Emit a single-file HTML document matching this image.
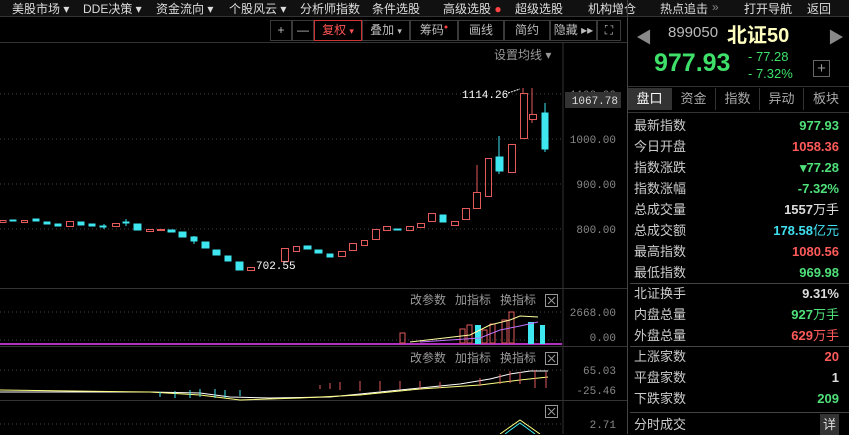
<!DOCTYPE html>
<html><head><meta charset="utf-8"><style>
*{margin:0;padding:0;box-sizing:border-box}
body{width:849px;height:434px;background:#000;overflow:hidden;position:relative;font-family:"Liberation Sans","Noto Sans CJK SC",sans-serif;color:#ccc}
.a{position:absolute;white-space:nowrap}
.menu{left:0;top:0;width:849px;height:17px;background:#111;border-bottom:1px solid #333;font-size:12px;color:#ddd}
.menu span{position:absolute;top:0}
.tb{top:20px;height:21px;border:1px solid #3a3a3a;font-size:12px;color:#bbb;text-align:center;line-height:19px}
.row{position:absolute;left:634px;width:205px;font-size:13px;height:21px;line-height:21px}
.row b{position:absolute;right:0;font-weight:bold;font-family:"Liberation Sans","Noto Sans CJK SC",sans-serif}
.g{color:#4fe07a}.r{color:#ff5a5a}.c{color:#40e0f0}.w{color:#ddd}
.tab{top:88px;height:22px;width:44px;text-align:center;font-size:13px;line-height:22px;color:#aaa;border-right:1px solid #333}
</style></head><body>
<div class="a menu">
<span style="left:12px">美股市场 ▾</span><span style="left:83px">DDE决策 ▾</span><span style="left:156px">资金流向 ▾</span><span style="left:229px">个股风云 ▾</span><span style="left:300px">分析师指数</span><span style="left:372px">条件选股</span><span style="left:443px">高级选股 <i style="color:#f44;font-style:normal">●</i></span><span style="left:515px">超级选股</span><span style="left:588px">机构增仓</span><span style="left:660px">热点追击</span><span style="left:712px;color:#888">»</span><span style="left:744px">打开导航</span><span style="left:807px">返回</span>
</div>
<div class="a tb" style="left:270px;width:22px">+</div>
<div class="a tb" style="left:292px;width:22px">—</div>
<div class="a tb" style="left:314px;width:48px;border-color:#c33;color:#f55">复权 <span style="font-size:9px">▾</span></div>
<div class="a tb" style="left:362px;width:48px">叠加 <span style="font-size:9px">▾</span></div>
<div class="a tb" style="left:410px;width:48px">筹码<span style="color:#f44;font-size:7px;position:relative;top:-5px">●</span></div>
<div class="a tb" style="left:458px;width:46px">画线</div>
<div class="a tb" style="left:504px;width:46px">简约</div>
<div class="a tb" style="left:550px;width:47px">隐藏 ▸▸</div>
<div class="a tb" style="left:597px;width:24px">⛶</div>
<div class="a" style="left:0;top:42px;width:628px;height:1px;background:#333"></div>
<div class="a" style="left:494px;top:46px;font-size:12px;color:#999">设置均线 ▾</div>

<svg class="a" style="left:0;top:0" width="628" height="434">
<g stroke="#444" stroke-dasharray="1 3">
<line x1="0" y1="94" x2="562" y2="94"/><line x1="0" y1="139" x2="562" y2="139"/><line x1="0" y1="184" x2="562" y2="184"/><line x1="0" y1="229" x2="562" y2="229"/>
<line x1="0" y1="312" x2="562" y2="312"/><line x1="0" y1="340" x2="562" y2="340"/><line x1="0" y1="370" x2="562" y2="370"/><line x1="0" y1="424" x2="562" y2="424"/>
</g>
<line x1="563" y1="42" x2="563" y2="434" stroke="#333"/>
<line x1="0" y1="288.5" x2="628" y2="288.5" stroke="#333"/>
<line x1="0" y1="346.5" x2="628" y2="346.5" stroke="#333"/>
<line x1="0" y1="400.5" x2="628" y2="400.5" stroke="#333"/>
<line x1="627.5" y1="0" x2="627.5" y2="434" stroke="#444"/>
<g font-family="Liberation Mono,monospace" font-size="11" fill="#888" text-anchor="end">
<text x="616" y="98">1100.00</text>
<text x="616" y="143">1000.00</text><text x="616" y="188">900.00</text><text x="616" y="233">800.00</text>
<text x="616" y="316">2668.00</text><text x="616" y="341">0.00</text><text x="616" y="374">65.03</text><text x="616" y="394">-25.46</text><text x="616" y="428">2.71</text>
</g>
<rect x="565" y="92" width="56" height="16" fill="#333"/>
<text x="618" y="104" font-family="Liberation Mono,monospace" font-size="11" fill="#ddd" text-anchor="end">1067.78</text>
<g stroke-width="1">
<g fill="none" stroke="#e25a5a">
<rect x="0" y="220.5" width="6" height="2"/><rect x="21.5" y="220.5" width="6" height="2"/><rect x="66.5" y="221.5" width="7" height="5"/><rect x="112.5" y="223.5" width="7" height="3"/><rect x="146.5" y="229.5" width="7" height="2"/><rect x="157.5" y="229.5" width="7" height="1"/><rect x="247.5" y="267.5" width="7" height="3"/><rect x="281.5" y="248.5" width="7" height="13"/><rect x="293.5" y="246.5" width="6" height="5"/><rect x="338.5" y="251.5" width="7" height="5"/><rect x="349.5" y="243.5" width="7" height="7"/><rect x="361.5" y="240.5" width="6" height="5"/><rect x="372.5" y="229.5" width="7" height="10"/><rect x="383.5" y="226.5" width="7" height="4"/><rect x="406.5" y="226.5" width="7" height="4"/><rect x="417.5" y="223.5" width="7" height="4"/><rect x="428.5" y="213.5" width="7" height="8"/><rect x="451.5" y="221.5" width="7" height="4"/><rect x="462.5" y="208.5" width="7" height="11"/><rect x="473.5" y="192.5" width="7" height="16"/><rect x="485.5" y="158.5" width="6" height="38"/><rect x="508.5" y="144.5" width="7" height="28"/><rect x="520.5" y="93.5" width="7" height="45"/><rect x="529.5" y="114.5" width="7" height="5"/>
<path d="M477 192V165M532 114V88M532 119V123M523 93V88"/>
</g>
<g fill="#3ee6f0" stroke="#3ee6f0">
<rect x="10" y="220" width="6" height="1"/><rect x="33" y="219" width="6" height="2"/><rect x="44" y="222" width="6" height="2"/><rect x="55" y="224" width="6" height="2"/><rect x="78" y="222" width="6" height="3"/><rect x="89" y="224" width="6" height="2"/><rect x="100" y="226" width="6" height="1"/><rect x="123" y="222" width="6" height="1"/><rect x="134" y="224" width="7" height="6"/><rect x="168" y="230" width="7" height="2"/><rect x="179" y="232" width="7" height="5"/><rect x="191" y="237" width="6" height="4"/><rect x="202" y="242" width="7" height="6"/><rect x="213" y="250" width="7" height="5"/><rect x="225" y="256" width="6" height="5"/><rect x="236" y="262" width="7" height="8"/><rect x="304" y="246" width="7" height="3"/><rect x="315" y="250" width="7" height="3"/><rect x="327" y="254" width="6" height="3"/><rect x="394" y="229" width="7" height="1"/><rect x="440" y="215" width="6" height="7"/><rect x="496" y="157" width="7" height="14"/><rect x="542" y="113" width="6" height="36"/>
<path d="M499 157V136M499 171V174M545 113V103M545 149V152M126 219V226M104 224V229M194 236V244" fill="none"/>
</g>
</g>
<text x="256" y="269" font-family="Liberation Mono,monospace" font-size="11" fill="#fff">702.55</text>
<text x="462" y="98" font-family="Liberation Mono,monospace" font-size="11" fill="#fff">1114.26</text>
<path d="M508 93l12-4" stroke="#fff" stroke-dasharray="2 1"/>
<g font-size="12" fill="#999" font-family="Noto Sans CJK SC,sans-serif"><text x="410" y="304">改参数</text><text x="455" y="304">加指标</text><text x="500" y="304">换指标</text>
<text x="410" y="362">改参数</text><text x="455" y="362">加指标</text><text x="500" y="362">换指标</text></g>
<g fill="none" stroke="#999"><rect x="545.5" y="294.5" width="12" height="12"/><rect x="545.5" y="352.5" width="12" height="12"/><rect x="545.5" y="405.5" width="12" height="12"/>
<path d="M548 297l7 7M555 297l-7 7M548 355l7 7M555 355l-7 7M548 408l7 7M555 408l-7 7"/></g>
<line x1="0" y1="344" x2="562" y2="344" stroke="#b030c0" stroke-width="2"/>
<g fill="none" stroke="#e25a5a"><rect x="400" y="333" width="5" height="10"/><rect x="460" y="329" width="5" height="14"/><rect x="467" y="325" width="5" height="18"/><rect x="490" y="324" width="5" height="19"/><rect x="502" y="320" width="5" height="23"/><rect x="509" y="312" width="5" height="31"/><rect x="482" y="330" width="5" height="13"/></g>
<g fill="#3ee6f0"><rect x="475" y="325" width="6" height="19"/><rect x="528" y="322" width="6" height="22"/><rect x="540" y="325" width="5" height="19"/></g>
<path d="M410 342L470 335L490 325L510 320L520 316L538 317" stroke="#ffffa0" fill="none"/>
<path d="M420 342L480 338L500 330L520 326L538 322" stroke="#c070ff" fill="none"/>
<path d="M0 392L150 392L200 393L230 397L270 398L330 397L380 392L420 388L460 384L490 379L510 374L530 371L548 371" stroke="#fff" fill="none"/>
<path d="M0 390L150 392L200 395L240 400L300 398L360 395L420 389L480 385L520 380L548 377" stroke="#ffff80" fill="none"/>
<g stroke="#e25a5a"><path d="M320 385v4M330 383v6M340 382v8M360 381v10M380 381v10M400 381v8M420 381v8M440 382v6M480 378v8M500 374v10M510 371v12M520 372v12M535 370v18M546 372v16"/></g>
<g stroke="#3ee6f0"><path d="M160 392v5M175 391v7M190 390v8M200 389v8M215 389v9M225 390v8M240 390v6"/></g>
<path d="M500 434L520 420L540 434" stroke="#ffff80" fill="none"/><path d="M505 434L520 423L535 434" stroke="#3ee6f0" fill="none"/>
</svg>

<div class="a" style="left:636px;top:24px;font-size:16px;color:#888">◀</div>
<div class="a" style="left:828px;top:24px;font-size:16px;color:#888">▶</div>
<div class="a" style="left:668px;top:24px;font-size:15px;color:#bbb">899050</div>
<div class="a" style="left:727px;top:19px;font-size:20px;font-weight:bold;color:#ffffc0">北证50</div>
<div class="a" style="left:654px;top:49px;font-size:25px;font-weight:bold;color:#3ee06a">977.93</div>
<div class="a" style="left:748px;top:48px;font-size:13px;color:#3ee06a;line-height:17px">- 77.28<br>- 7.32%</div>
<div class="a" style="left:813px;top:60px;width:17px;height:17px;border:1px solid #666;color:#999;text-align:center;line-height:15px;font-size:15px">+</div>
<div class="a" style="left:628px;top:86px;width:221px;height:1px;background:#333"></div>
<div class="a tab" style="left:628px;background:#333;color:#fff">盘口</div>
<div class="a tab" style="left:672px">资金</div>
<div class="a tab" style="left:716px">指数</div>
<div class="a tab" style="left:760px">异动</div>
<div class="a tab" style="left:804px;border:none">板块</div>
<div class="a" style="left:628px;top:112px;width:221px;height:1px;background:#333"></div>
<div class="row" style="top:115px">最新指数<b class="g">977.93</b></div>
<div class="row" style="top:136px">今日开盘<b class="r">1058.36</b></div>
<div class="row" style="top:157px">指数涨跌<b class="g">▾77.28</b></div>
<div class="row" style="top:178px">指数涨幅<b class="g">-7.32%</b></div>
<div class="row" style="top:199px">总成交量<b class="w">1557<span style="font-weight:normal">万手</span></b></div>
<div class="row" style="top:220px">总成交额<b class="c">178.58<span style="font-weight:normal">亿元</span></b></div>
<div class="row" style="top:241px">最高指数<b class="r">1080.56</b></div>
<div class="row" style="top:262px">最低指数<b class="g">969.98</b></div>
<div class="a" style="left:630px;top:283px;width:219px;height:1px;background:#444"></div>
<div class="row" style="top:283px">北证换手<b class="w">9.31%</b></div>
<div class="row" style="top:304px">内盘总量<b class="g">927<span style="font-weight:normal">万手</span></b></div>
<div class="row" style="top:325px">外盘总量<b class="r">629<span style="font-weight:normal">万手</span></b></div>
<div class="a" style="left:630px;top:346px;width:219px;height:1px;background:#444"></div>
<div class="row" style="top:346px">上涨家数<b class="r">20</b></div>
<div class="row" style="top:367px">平盘家数<b class="w">1</b></div>
<div class="row" style="top:388px">下跌家数<b class="g">209</b></div>
<div class="a" style="left:630px;top:412px;width:219px;height:1px;background:#444"></div>
<div class="row" style="top:414px">分时成交<b class="w" style="font-weight:normal;background:#333;padding:0 3px">详</b></div>
</body></html>
